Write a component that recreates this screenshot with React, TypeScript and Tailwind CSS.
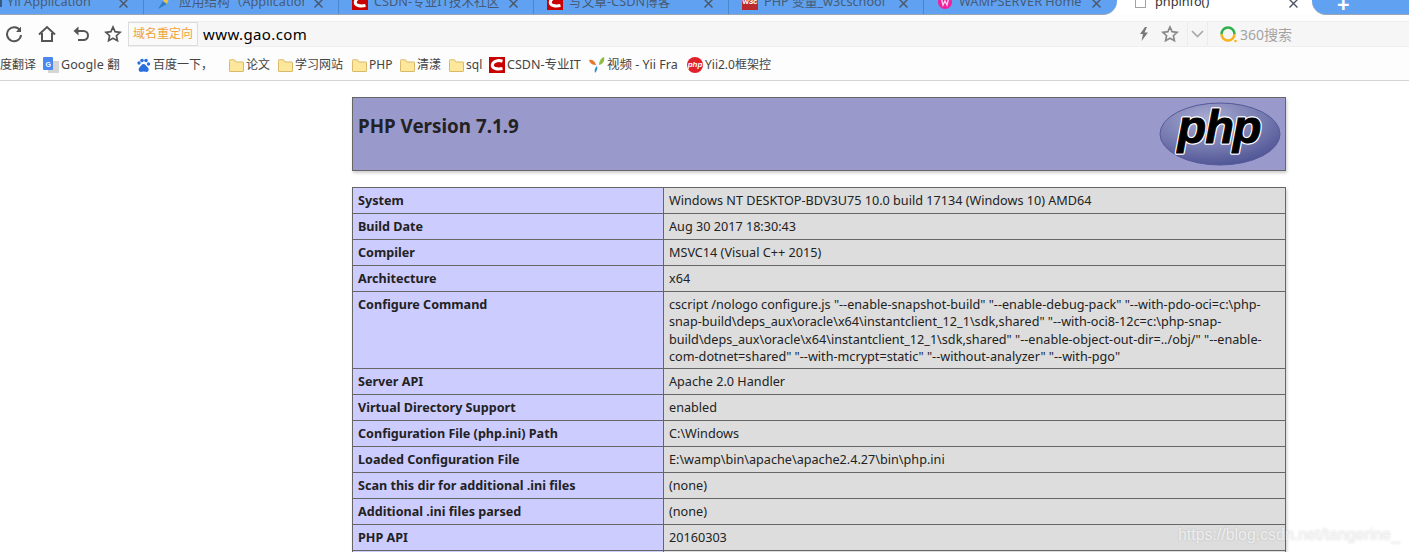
import React from "react";

const sans = "font-['Noto_Sans','Noto_Sans_CJK_SC',sans-serif]";

function X() {
  return (
    <svg width="11" height="11" viewBox="0 0 11 11" className="shrink-0">
      <path d="M1.5 1.500l8 8M9.500 1.500l-8 8" stroke="#4b5563" strokeWidth="1.400" />
    </svg>
  );
}

function CsdnIcon({ size = 16 }: { size?: number }) {
  return (
    <svg width={size} height={size} viewBox="0 0 16 16" className="shrink-0">
      <rect width="16" height="16" fill="#c90000" />
      <path d="M13.500 4.200C9 2.800 4 4 3.300 8c-.5 3.500 5 4.600 10.200 3.500" fill="none" stroke="#fff" strokeWidth="3" />
    </svg>
  );
}

const tabs: { w: number; label: string; icon: React.ReactNode; max: string }[] = [
  { w: 144, label: "Yii Application", icon: null, max: "max-w-[100px]" },
  { w: 195, label: "应用结构（Application", max: "max-w-[125px]", icon: (
    <svg width="16" height="16" viewBox="0 0 16 16" className="shrink-0"><path d="M1 15 6 7l4 3z" fill="#2f7fc4" /><path d="M6 7l3-5 2 5-1 3z" fill="#e8c547" /><path d="M9 2l6-1-4 6z" fill="#a8c6e8" /></svg>
  ) },
  { w: 195, label: "CSDN-专业IT技术社区", icon: <CsdnIcon />, max: "max-w-[125px]" },
  { w: 195, label: "写文章-CSDN博客", icon: <CsdnIcon />, max: "max-w-[125px]" },
  { w: 195, label: "PHP 变量_w3cschool", max: "max-w-[125px]", icon: (
    <div className="w-4 h-4 bg-[#b92b2f] text-white text-[8px] leading-[16px] text-center font-bold shrink-0 font-['Liberation_Sans',sans-serif]">w3c</div>
  ) },
  { w: 192, label: "WAMPSERVER Home", max: "max-w-[125px]", icon: (
    <svg width="16" height="16" viewBox="0 0 16 16" className="shrink-0"><circle cx="8" cy="8" r="7" fill="#f0219c" /><path d="M4.500 5l1.500 6 2-4 2 4 1.500-6" fill="none" stroke="#ffd0ec" strokeWidth="1.400" /></svg>
  ) },
];

function Tabs() {
  return (
    <div className="h-[15px] bg-white flex items-start overflow-hidden relative">
      <div className="h-[14px] w-[1117px] bg-[#60a2f1] rounded-br-[14px] flex overflow-hidden shrink-0 border-b border-[#9aa7b5] box-content -mb-px">
        {tabs.map((t, i) => (
          <div
            key={i}
            style={{ width: t.w }}
            className="h-[14px] shrink-0 relative border-r border-[#4a86cc] last:border-r-0 overflow-hidden"
          >
            <div className={`absolute top-[-8px] left-0 right-0 flex items-center ${i === 0 ? "pl-[7px]" : "pl-[13px]"} h-[20px]`}>
              {t.icon}
              <span className={`${i === 0 ? "" : "ml-[6px]"} ${t.max} text-[12.700px] text-[#465a76] whitespace-nowrap overflow-hidden`}>{t.label}</span>
            </div>
            {i === 0 && <div className="absolute left-0 top-0 w-[2px] h-[7px] bg-[#3a5a80]" />}
            <div className="absolute right-[14px] top-[-2px]"><X /></div>
          </div>
        ))}
      </div>
      <div className="h-[14px] w-[195px] shrink-0 relative overflow-hidden">
        <div className="absolute top-[-8px] left-[18px] flex items-center h-[20px]">
          <div className="w-[11px] h-[11px] border border-[#a3a3a3] bg-white" />
          <span className="ml-[9px] text-[12.700px] text-[#333]">phpinfo()</span>
        </div>
        <div className="absolute left-[171px] top-[-2px]"><X /></div>
      </div>
      <div className="h-[14px] flex-1 bg-[#60a2f1] rounded-bl-[14px] border-b border-[#9aa7b5] box-content relative">
        <span className="absolute left-[25px] top-[-7px] text-white text-[22px] font-bold leading-[20px]">+</span>
      </div>
    </div>
  );
}

function Toolbar() {
  const c = "#555";
  return (
    <div className="h-[32px] bg-[#fdfdfd] flex items-end">
      <div className="w-[128px] h-[26px] flex items-center pl-[5px] shrink-0">
        <svg width="18" height="18" viewBox="0 0 18 18" className="shrink-0"><path d="M15 5.500A7 7 0 1 0 16 10" fill="none" stroke={c} strokeWidth="2" /><path d="M16 1.500V7h-5z" fill={c} /></svg>
        <svg width="18" height="18" viewBox="0 0 18 18" className="ml-[15px] shrink-0"><path d="M1 9.500 9 2l8 7.500M4 8v8h10V8" fill="none" stroke={c} strokeWidth="2" /></svg>
        <svg width="18" height="18" viewBox="0 0 18 18" className="ml-[16px] shrink-0"><path d="M3 6h8.500a4.500 4.500 0 0 1 0 9H6" fill="none" stroke={c} strokeWidth="2" /><path d="M6.500 1.500v9L1.500 6z" fill={c} /></svg>
        <svg width="18" height="18" viewBox="0 0 18 18" className="ml-[14px] shrink-0"><path d="M9 2l2.100 4.700 5 .6-3.700 3.400 1 5L9 13.200l-4.400 2.500 1-5L1.900 7.300l5-.6z" fill="none" stroke={c} strokeWidth="1.700" /></svg>
      </div>
      <div className="flex-1 h-[26px] bg-[#f6f6f6] border-y border-[#efefef] flex items-center relative">
        <div className="w-[70px] h-[24px] border border-[#dcdcdc] bg-[#fafafa] text-[#f0a33c] text-[12px] flex items-center justify-center shrink-0">域名重定向</div>
        <span className="ml-[5px] text-[15px] text-black tracking-[0.4px]">www.gao.com</span>
        <div className="ml-auto flex items-center h-full">
          <svg width="12" height="14" viewBox="0 0 12 14" className="mr-[11px]"><path d="M7 0 2 7h3l-1.500 7L10 5.500H6.500L9 0z" fill="#777" /></svg>
          <svg width="18" height="18" viewBox="0 0 18 18" className="mr-[8px]"><path d="M9 2l2.100 4.700 5 .6-3.700 3.400 1 5L9 13.200l-4.400 2.500 1-5L1.900 7.300l5-.6z" fill="none" stroke="#8a8a8a" strokeWidth="1.700" /></svg>
          <div className="h-full w-[21px] border-x border-[#ececec] flex items-center justify-center">
            <svg width="13" height="8" viewBox="0 0 13 8"><path d="M1 1l5.500 5.500L12 1" fill="none" stroke="#aaa" strokeWidth="1.700" /></svg>
          </div>
          <div className="w-[201px] flex items-center pl-[12px]">
            <svg width="17" height="17" viewBox="0 0 17 17" className="shrink-0">
              <path d="M1.500 8a6.500 6.500 0 0 1 13 0" fill="none" stroke="#2eb24b" strokeWidth="2.500" />
              <path d="M1.500 8a6.500 6.500 0 0 0 13 0" fill="none" stroke="#f6b21b" strokeWidth="2.500" />
              <circle cx="15.500" cy="15" r="1.300" fill="#f6b21b" />
            </svg>
            <span className="ml-[3px] text-[14px] text-[#a3a3a3]">360搜索</span>
          </div>
        </div>
      </div>
    </div>
  );
}

function FolderIcon() {
  return (
    <svg width="15" height="13" viewBox="0 0 15 13" className="shrink-0">
      <path d="M.5 2.500V12a.5.500 0 0 0 .5.500h13a.5.500 0 0 0 .5-.500V3.500a.5.500 0 0 0-.5-.500H7L5.500.8H1a.5.500 0 0 0-.5.500z" fill="#fde79a" stroke="#d9b968" />
    </svg>
  );
}

function B({ w, icon, label, cls = "text-[12px]" }: { w: number; icon?: React.ReactNode; label: string; cls?: string }) {
  return (
    <div style={{ width: w }} className="shrink-0 flex items-center gap-[2px] overflow-hidden whitespace-nowrap">
      {icon}
      <span className={`${cls} text-[#444]`}>{label}</span>
    </div>
  );
}

function Bookmarks() {
  return (
    <div className="h-[34px] bg-[#fdfdfd] border-b border-[#d4d4d4] flex items-center overflow-hidden pt-[3px]">
      <div className="w-[43px] shrink-0 overflow-hidden whitespace-nowrap flex justify-end pr-[7px]">
        <span className="text-[12px] text-[#444]">度翻译</span>
      </div>
      <B w={93} label="Google 翻" cls="text-[12.500px] tracking-[0.1px]" icon={
        <svg width="16" height="16" viewBox="0 0 16 16" className="shrink-0"><rect x="5" y="4" width="11" height="12" fill="#d5d5d5" /><rect width="10" height="13" rx="1" fill="#4a87ee" /><text x="2.500" y="9.500" fontSize="7" fill="#fff" fontWeight="700" fontFamily="Liberation Sans">G</text></svg>
      } />
      <B w={93} label="百度一下，" icon={
        <svg width="15" height="15" viewBox="0 0 15 15" className="shrink-0" fill="#2a6fe0"><circle cx="3" cy="5" r="1.700" /><circle cx="6" cy="2.500" r="1.800" /><circle cx="10" cy="2.500" r="1.800" /><circle cx="12.500" cy="6" r="1.700" /><path d="M7.500 6c-2 0-2.500 2-4 3.500C2 11 2.500 14 5 14c1.200 0 1.500-.4 2.500-.4s1.500.4 2.800.4c2.500 0 3-3 1.500-4.500C10 8 9.500 6 7.500 6z" /></svg>
      } />
      <B w={49} label="论文" icon={<FolderIcon />} />
      <B w={74} label="学习网站" icon={<FolderIcon />} />
      <B w={48} label="PHP" icon={<FolderIcon />} />
      <B w={49} label="清漾" icon={<FolderIcon />} />
      <B w={40} label="sql" icon={<FolderIcon />} />
      <B w={100} label="CSDN-专业IT" cls="text-[12.500px]" icon={<CsdnIcon />} />
      <B w={98} label="视频 - Yii Fra" cls="text-[12.500px]" icon={
        <svg width="16" height="16" viewBox="0 0 16 16" className="shrink-0"><path d="M0 3c3-1 6 1 7 5-3 0-6-1-7-5z" fill="#e8772e" /><path d="M15 0c1 4-1 7-5 8 0-4 2-7 5-8z" fill="#8cbf3f" /><path d="M8 9c1 2 0 5-2 7-1-3 0-5 2-7z" fill="#2f8fd0" /></svg>
      } />
      <B w={100} label="Yii2.0框架控" icon={
        <div className="w-[16px] h-[16px] rounded-full bg-[#e0212b] text-white text-[8px] leading-[16px] text-center font-bold shrink-0 italic font-['Liberation_Sans',sans-serif]">php</div>
      } />
    </div>
  );
}

const rows: [string, React.ReactNode][] = [
  ["System", "Windows NT DESKTOP-BDV3U75 10.0 build 17134 (Windows 10) AMD64"],
  ["Build Date", "Aug 30 2017 18:30:43"],
  ["Compiler", "MSVC14 (Visual C++ 2015)"],
  ["Architecture", "x64"],
  ["Configure Command", <>cscript /nologo configure.js &quot;--enable-snapshot-build&quot; &quot;--enable-debug-pack&quot; &quot;--with-pdo-oci=c:\php-<br />snap-build\deps_aux\oracle\x64\instantclient_12_1\sdk,shared&quot; &quot;--with-oci8-12c=c:\php-snap-<br />build\deps_aux\oracle\x64\instantclient_12_1\sdk,shared&quot; &quot;--enable-object-out-dir=../obj/&quot; &quot;--enable-<br />com-dotnet=shared&quot; &quot;--with-mcrypt=static&quot; &quot;--without-analyzer&quot; &quot;--with-pgo&quot;</>],
  ["Server API", "Apache 2.0 Handler"],
  ["Virtual Directory Support", "enabled"],
  ["Configuration File (php.ini) Path", "C:\\Windows"],
  ["Loaded Configuration File", "E:\\wamp\\bin\\apache\\apache2.4.27\\bin\\php.ini"],
  ["Scan this dir for additional .ini files", "(none)"],
  ["Additional .ini files parsed", "(none)"],
  ["PHP API", "20160303"],
  ["", ""],
];

function PhpLogo() {
  return (
    <svg width="122" height="64" viewBox="0 0 122 64">
      <defs>
        <radialGradient id="g" cx="40%" cy="25%" r="80%">
          <stop offset="0%" stopColor="#a8abd2" />
          <stop offset="60%" stopColor="#7378ae" />
          <stop offset="100%" stopColor="#4c5193" />
        </radialGradient>
      </defs>
      <ellipse cx="61" cy="32" rx="60" ry="31" fill="url(#g)" stroke="#565a99" />
      <text x="60" y="41" textAnchor="middle" fontSize="47" fontWeight="700" fontStyle="italic" fill="#000" stroke="#fff" strokeWidth="3.500" strokeLinejoin="round" fontFamily="Liberation Sans, sans-serif" letterSpacing="-1">php</text>
      <text x="60" y="41" textAnchor="middle" fontSize="47" fontWeight="700" fontStyle="italic" fill="#000" stroke="#000" strokeWidth="1" fontFamily="Liberation Sans, sans-serif" letterSpacing="-1">php</text>
    </svg>
  );
}

function PhpInfo() {
  return (
    <div className={`w-[934px] ml-[352px] mt-[16px] ${sans} text-[#222]`}>
      <div className="h-[74px] bg-[#9999cc] border border-[#666] shadow-[1px_2px_3px_#ccc] flex justify-between pl-[5px] pr-[4px]">
        <h1 className="text-[18.800px] font-bold mt-[14px] leading-[28px] text-[#222]">PHP Version 7.1.9</h1>
        <div className="mt-[4px]"><PhpLogo /></div>
      </div>
      <div className="mt-[16px] border-x border-t border-[#666] shadow-[1px_2px_3px_#ccc]">
        {rows.map(([k, v], i) => (
          <div key={i} className="flex border-b border-[#666] min-h-[26px]">
            <div className="w-[311px] shrink-0 bg-[#ccccff] border-r border-[#666] px-[5px] pt-[4px] pb-[3px] text-[12.600px] font-bold leading-[17.250px] text-[#222]">{k}</div>
            <div className="flex-1 bg-[#dddddd] px-[5px] pt-[4px] pb-[3px] text-[12.650px] leading-[17.250px] text-[#222] whitespace-nowrap">{v}</div>
          </div>
        ))}
      </div>
    </div>
  );
}

export default function App() {
  return (
    <div className={`w-[1409px] h-[552px] overflow-hidden bg-white relative ${sans}`}>
      <Tabs />
      <Toolbar />
      <Bookmarks />
      <PhpInfo />
      <div className="absolute left-[1178px] top-[523px] text-[15.900px] text-white/70 whitespace-nowrap [text-shadow:0_0_2px_rgba(120,120,120,0.35)] font-['Liberation_Sans',sans-serif]">https://blog.csdn.net/tangerine_</div>
    </div>
  );
}
